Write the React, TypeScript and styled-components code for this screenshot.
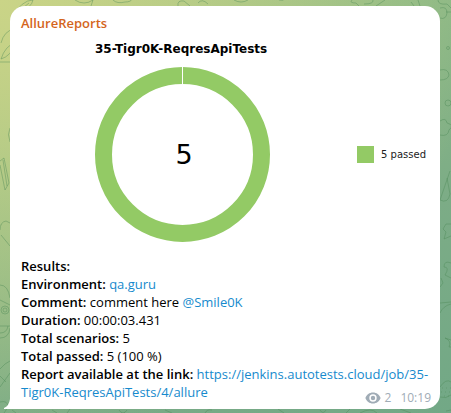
import React from "react";
import styled, { createGlobalStyle } from "styled-components";

const GlobalStyle = createGlobalStyle`
  *, *::before, *::after { box-sizing: border-box; }
  body { margin: 0; font-family: "Open Sans", "Noto Sans", sans-serif; }
`;

const Chat = styled.main`
  position: relative;
  min-height: 100vh;
  padding: 6px 11px 4px 10px;
  overflow: hidden;
  background:
    radial-gradient(ellipse at 0% 0%, #cad487 0%, rgba(202, 212, 135, 0) 75%),
    linear-gradient(155deg, #a8c686 0%, #8fba86 30%, #7cac86 65%, #72a886 100%);
`;

const Doodles = styled.svg`
  position: absolute;
  inset: 0;
  width: 100%;
  height: 100%;
  fill: none;
  stroke: #4c8855;
  stroke-opacity: 0.4;
  stroke-width: 1;
`;

const Bubble = styled.article`
  position: relative;
  padding: 8px 11px;
  border-radius: 15px 15px 15px 0;
  background: #fff;
  color: #000;
  font-size: 13px;
  line-height: 18px;
`;

const Tail = styled.svg`
  position: absolute;
  right: 100%;
  bottom: 0;
  width: 6px;
  height: 10px;
  fill: #fff;
`;

const Sender = styled.h1`
  margin: 0;
  color: #d4651c;
  font-size: 13px;
  font-weight: 600;
  line-height: 18px;
`;

const Report = styled.figure`
  margin: 0;
  padding: 8px 0 15px;
  font-family: "DejaVu Sans", sans-serif;
`;

const ReportTitle = styled.figcaption`
  padding-left: 74px;
  color: #000;
  font-size: 12px;
  font-weight: 700;
  line-height: 18px;
`;

const ChartRow = styled.div`
  display: flex;
  align-items: center;
  justify-content: space-between;
  padding: 9px 3px 0 74px;
`;

const Donut = styled.div`
  display: grid;
  place-items: center;
  width: 175px;
  height: 175px;
  > * { grid-area: 1 / 1; }
`;

const Total = styled.span`
  padding-left: 3px;
  font-size: 27px;
  line-height: 32px;
`;

const Legend = styled.div`
  display: flex;
  align-items: center;
  gap: 7px;
  color: #222;
  font-size: 10px;
`;

const Swatch = styled.span`
  width: 17px;
  height: 17px;
  background: #93ca65;
`;

const Line = styled.div`
  b { font-weight: 600; }
`;

const Link = styled.a`
  color: #168acd;
  text-decoration: none;
  &:hover { text-decoration: underline; }
`;

const Meta = styled.footer`
  position: absolute;
  right: 9px;
  bottom: 2px;
  display: flex;
  align-items: center;
  gap: 4px;
  color: #a0acb6;
  font-size: 12px;
`;

const Time = styled.time`
  margin-left: 5px;
`;

const facts: { label: string; value?: React.ReactNode }[] = [
  { label: "Results:" },
  { label: "Environment:", value: <Link href="https://qa.guru">qa.guru</Link> },
  { label: "Comment:", value: <>comment here <Link href="https://t.me/Smile0K">@Smile0K</Link></> },
  { label: "Duration:", value: "00:00:03.431" },
  { label: "Total scenarios:", value: "5" },
  { label: "Total passed:", value: "5 (100 %)" },
  {
    label: "Report available at the link:",
    value: (
      <Link href="https://jenkins.autotests.cloud/job/35-Tigr0K-ReqresApiTests/4/allure">
        https://jenkins.autotests.cloud/job/35-Tigr0K-ReqresApiTests/4/allure
      </Link>
    ),
  },
];

function Wallpaper() {
  return (
    <Doodles viewBox="0 0 451 413" preserveAspectRatio="none" aria-hidden="true">
      <path d="M1 43 Q4 31 14 29 M1 59 Q5 46 16 42 M1 59 Q11 56 15 44 M0 62H11 M12 17 Q22 0 33 0 Q32 7 17 15 M12 17 29 3 M75 0Q84 6 93 0 M91 6 93 0 M113 0Q117 4 125 2Q131 2 132 -1 M178 6Q177 0 184 1L190 6 M198 3Q202 -2 208 4 M234 0Q241 4 248 0 M279 0Q283 1 285 -1" />
      <path d="M352 0Q349 3 356 3L359 6 M364 4Q374 4 373 0 M376 6 385 0 M411 2 414 6 M418 0 420 6 M438 0Q438 5 447 4L451 8 M440 8Q447 6 447 13Q446 20 440 18 M446 12H451" />
      <circle cx="448" cy="48" r="1.5" />
      <circle cx="448" cy="103" r="3" />
      <path d="M440 70Q448 68 449 75Q448 80 440 80 M440 121Q446 117 447 123Q455 125 449 130Q448 137 440 135 M440 200 450 171 M440 200Q448 204 450 194L447 178 M451 224 446 224 443 229 446 232 444 239 451 236 M451 263Q444 260 444 267Q450 267 445 275L451 278 M441 278 443 283 440 287 M440 303 451 302 M440 313Q443 306 451 304 M445 338 451 340 M445 338Q452 341 449 347H451 M440 387Q446 378 451 382 M440 397Q446 399 451 395" />
      <path strokeDasharray="1 3" d="M442 388H451 M441 392H451 M444 396H451" />
      <path d="M10 128Q7 134 10 142 M0 161 4 158 9 183 5 190 0 165 M3 160 7 186 M0 230Q0 222 6 221L10 223 M1 235 10 246 M0 285Q8 285 10 298 M0 300 10 305 M0 338Q9 338 10 328 M0 333Q7 333 8 326 M0 326H10 M0 369Q5 363 10 361 M0 387 10 373 M0 376 6 382" />
      <circle cx="5" cy="310" r="4" />
      <circle cx="5" cy="310" r="2" />
      <path d="M0 402Q8 400 8 407L4 413 M12 410 16 413 M52 410 57 413 M67 413 70 409 M119 410Q123 416 127 410 M165 410 172 413 M205 413Q207 409 212 410 M278 409 284 413 M320 410Q323 415 326 410 M346 413 350 409 M360 413Q371 407 377 413 M400 409 411 413 M446 411 451 410" />
    </Doodles>
  );
}

export default function App() {
  return (
    <>
      <GlobalStyle />
      <Chat>
        <Wallpaper />
        <Bubble>
          <Sender>AllureReports</Sender>
          <Report>
            <ReportTitle>35-Tigr0K-ReqresApiTests</ReportTitle>
            <ChartRow>
              <Donut>
                <svg width="175" height="175" viewBox="0 0 175 175" aria-hidden="true">
                  <circle cx="87.5" cy="87.5" r="79" fill="none" stroke="#93ca65" strokeWidth="17" />
                  <path d="M87.5 0V18" stroke="#fff" />
                </svg>
                <Total>5</Total>
              </Donut>
              <Legend>
                <Swatch />
                <span>5 passed</span>
              </Legend>
            </ChartRow>
          </Report>
          {facts.map(({ label, value }) => (
            <Line key={label}>
              <b>{label}</b> {value}
            </Line>
          ))}
          <Meta>
            <svg width="16" height="12" viewBox="0 0 16 12" role="img" aria-label="Views">
              <path
                fill="#a0acb6"
                fillRule="evenodd"
                d="M8 .5C4.4.5 1.6 2.7.4 6c1.2 3.3 4 5.5 7.600 5.500S14.400 9.300 15.600 6C14.400 2.700 11.600.5 8 .5Zm0 9.200a3.700 3.700 0 1 1 0-7.400 3.700 3.700 0 0 1 0 7.400Zm0-1.500a2.200 2.200 0 1 0 0-4.400 2.200 2.200 0 0 0 0 4.400Z"
              />
            </svg>
            <span>2</span>
            <Time>10:19</Time>
          </Meta>
          <Tail viewBox="0 0 6 10" aria-hidden="true">
            <path d="M6 0Q5 7 0 9V10H6Z" />
          </Tail>
        </Bubble>
      </Chat>
    </>
  );
}
